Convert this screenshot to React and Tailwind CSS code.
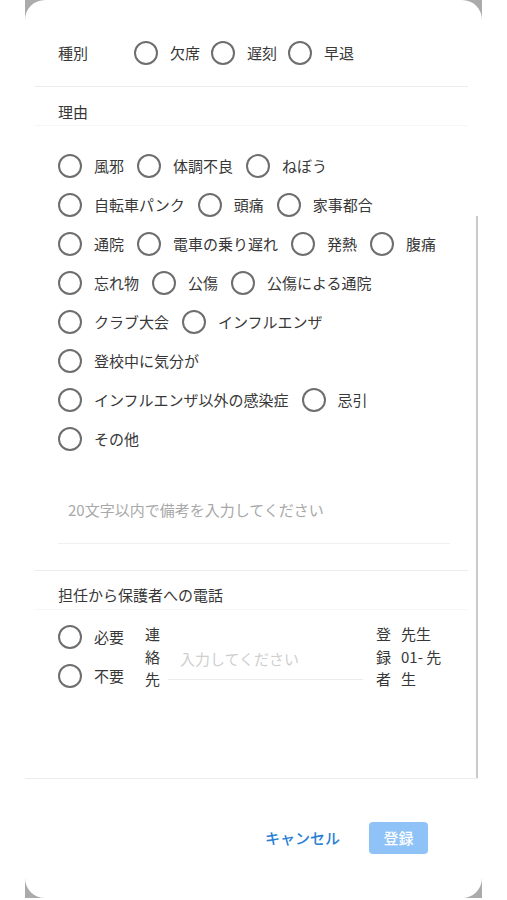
import { useState } from 'react';

const reasons = [
    ['風邪', '体調不良', 'ねぼう'],
    ['自転車パンク', '頭痛', '家事都合'],
    ['通院', '電車の乗り遅れ', '発熱', '腹痛'],
    ['忘れ物', '公傷', '公傷による通院'],
    ['クラブ大会', 'インフルエンザ'],
    ['登校中に気分が'],
    ['インフルエンザ以外の感染症', '忌引'],
    ['その他'],
];

function Radio({ label, checked, onClick }) {
    return (
        <button type="button" onClick={onClick} className="flex items-center">
            <span className="flex h-[24px] w-[24px] items-center justify-center rounded-full border-2 border-[#6e6e6e]">
                {checked && <span className="h-[12px] w-[12px] rounded-full bg-[#6e6e6e]" />}
            </span>
            <span className="ml-[12px] text-[15px] leading-[22px] text-[#383838]">{label}</span>
        </button>
    );
}

export default function App() {
    const [kind, setKind] = useState(null);
    const [reason, setReason] = useState(null);
    const [phone, setPhone] = useState(null);

    return (
        <div
            className="h-[900px] w-[507px] bg-white"
            style={{ fontFamily: '"Noto Sans CJK JP", "Noto Sans", sans-serif' }}
        >
            <div className="ml-[25px] h-[898px] w-[457px] bg-[#ababab]">
                <div className="flex h-full flex-col rounded-[20px] bg-white">
                    {/* scroll area */}
                    <div className="flex h-[779px] w-[453px] border-b border-[#ececec]">
                        <div className="flex-1">
                            <div className="flex h-[86px] items-center pl-[33px] pt-[20px]">
                                <span className="w-[76px] text-[15px] leading-[22px] text-[#383838]">種別</span>
                                <div className="flex gap-[11px]">
                                    {['欠席', '遅刻', '早退'].map((k) => (
                                        <Radio key={k} label={k} checked={kind === k} onClick={() => setKind(k)} />
                                    ))}
                                </div>
                            </div>

                            <div className="ml-[10px] mr-[8px] h-[40px] border-y border-t-[#ececec] border-b-[#f6f6f6] pl-[23px] pt-[12px]">
                                <span className="text-[15px] leading-[22px] text-[#383838]">理由</span>
                            </div>

                            <div className="pl-[33px] pt-[20px]">
                                {reasons.map((row, i) => (
                                    <div key={i} className="flex h-[39px] items-center gap-[13px]">
                                        {row.map((r) => (
                                            <Radio key={r} label={r} checked={reason === r} onClick={() => setReason(r)} />
                                        ))}
                                    </div>
                                ))}
                            </div>

                            <div className="ml-[33px] mr-[26px] mt-[13px] h-[73px] border-b border-[#f0f0f0] pl-[10px] pt-[26px]">
                                <span className="text-[15px] leading-[22px] text-[#a8a8a8]">20文字以内で備考を入力してください</span>
                            </div>

                            <div className="ml-[10px] mr-[8px] mt-[26px] h-[40px] border-y border-t-[#ececec] border-b-[#f6f6f6] pl-[23px] pt-[11px]">
                                <span className="text-[15px] leading-[22px] text-[#383838]">担任から保護者への電話</span>
                            </div>

                            <div className="flex items-start pl-[33px] pt-[7px]">
                                <div className="w-[87px]">
                                    {['必要', '不要'].map((p) => (
                                        <div key={p} className="flex h-[39px] items-center">
                                            <Radio label={p} checked={phone === p} onClick={() => setPhone(p)} />
                                        </div>
                                    ))}
                                </div>
                                <div className="mt-[6px] w-[15px] text-[15px] leading-[22.5px] text-[#383838]">
                                    <div>連</div>
                                    <div>絡</div>
                                    <div>先</div>
                                </div>
                                <div className="ml-[8px] mt-[26px] h-[37px] w-[195px] border-b border-[#ececec] pl-[12px] pt-[3px]">
                                    <span className="text-[15px] leading-[22px] text-[#cfcfcf]">入力してください</span>
                                </div>
                                <div className="ml-[13px] mt-[6px] w-[15px] text-[15px] leading-[22.5px] text-[#383838]">
                                    <div>登</div>
                                    <div>録</div>
                                    <div>者</div>
                                </div>
                                <div className="ml-[10px] mt-[6px] text-[15px] leading-[22.5px] text-[#383838]">
                                    <div>先生</div>
                                    <div>01- 先</div>
                                    <div>生</div>
                                </div>
                            </div>
                        </div>
                        {/* scrollbar */}
                        <div className="flex w-[2px] flex-col pt-[216px]">
                            <div className="flex-1 bg-[#cacaca]" />
                        </div>
                    </div>

                    {/* footer */}
                    <div className="flex flex-1 items-center justify-end gap-[29px] pb-[1px] pr-[54px]">
                        <button type="button" className="text-[15px] font-medium leading-[22px] text-[#2a7fd4]">
                            キャンセル
                        </button>
                        <button
                            type="button"
                            disabled
                            className="flex h-[32px] w-[59px] items-center justify-center rounded-[4px] bg-[#8fc2f7] text-[15px] font-medium text-white"
                        >
                            登録
                        </button>
                    </div>
                </div>
            </div>
        </div>
    );
}
